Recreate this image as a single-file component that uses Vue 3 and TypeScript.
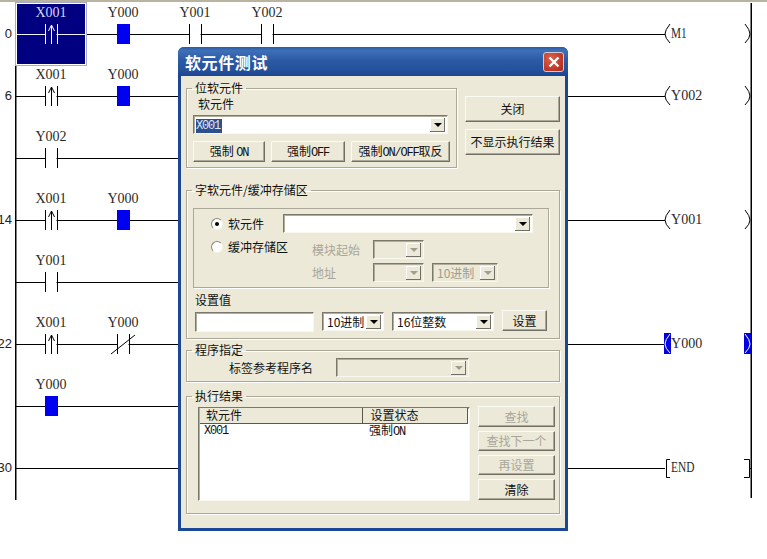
<script setup lang="ts">
interface Contact { x: number; label: string; kind: 'rise' | 'no' | 'nc' | 'block' }
interface Rung { y: number; num?: string; end: number; items: Contact[] }

const rungs: Rung[] = [
  { y: 34, num: '0', end: 665, items: [
    { x: 51, label: 'X001', kind: 'rise' }, { x: 123, label: 'Y000', kind: 'block' },
    { x: 195, label: 'Y001', kind: 'no' }, { x: 267, label: 'Y002', kind: 'no' } ] },
  { y: 96, num: '6', end: 665, items: [
    { x: 51, label: 'X001', kind: 'rise' }, { x: 123, label: 'Y000', kind: 'block' } ] },
  { y: 158, end: 300, items: [ { x: 51, label: 'Y002', kind: 'no' } ] },
  { y: 220, num: '14', end: 665, items: [
    { x: 51, label: 'X001', kind: 'rise' }, { x: 123, label: 'Y000', kind: 'block' } ] },
  { y: 282, end: 300, items: [ { x: 51, label: 'Y001', kind: 'no' } ] },
  { y: 344, num: '22', end: 665, items: [
    { x: 51, label: 'X001', kind: 'rise' }, { x: 123, label: 'Y000', kind: 'nc' } ] },
  { y: 406, end: 300, items: [ { x: 51, label: 'Y000', kind: 'block' } ] },
  { y: 468, num: '30', end: 665, items: [] },
]
const coils = [
  { y: 34, label: 'M1', active: false },
  { y: 96, label: 'Y002', active: false },
  { y: 220, label: 'Y001', active: false },
  { y: 344, label: 'Y000', active: true },
]
const isSel = (r: Rung, c: Contact): boolean => r.y === 34 && c.x === 51
</script>

<template>
  <div class="page">
    <svg class="ladder" width="767" height="559" viewBox="0 0 767 559">
      <rect x="0" y="0" width="767" height="2" fill="#b8b4a0" />
      <rect x="15" y="64" width="1.5" height="436" fill="#000" />
      <rect x="750.5" y="3" width="1.5" height="495" fill="#000" />

      <g v-for="r in rungs" :key="r.y">
        <text v-if="r.num" class="num" x="12" :y="r.y + 4">{{ r.num }}</text>
        <line x1="16" :x2="r.end" :y1="r.y + .5" :y2="r.y + .5" stroke="#000" stroke-width="1" />
      </g>

      <rect x="16.5" y="3.5" width="69" height="61" fill="#000080" stroke="#fff" stroke-width="1" />
      <rect x="15.5" y="2.5" width="71" height="63" fill="none" stroke="#a9a9c8" stroke-width="1" />
      <line x1="16" x2="86" y1="34.5" y2="34.5" stroke="#f0f0ff" stroke-width="1" />

      <g v-for="r in rungs" :key="'i' + r.y">
        <g v-for="c in r.items" :key="c.x">
          <g v-if="c.kind !== 'block'">
            <rect :x="c.x - 5.5" :y="r.y - 1" width="11" height="3" :fill="isSel(r, c) ? '#000080' : '#fff'" />
            <line :x1="c.x - 6 + .5" :x2="c.x - 6 + .5" :y1="r.y - 10" :y2="r.y + 10" :stroke="isSel(r, c) ? '#fff' : '#000'" />
            <line :x1="c.x + 6 + .5" :x2="c.x + 6 + .5" :y1="r.y - 10" :y2="r.y + 10" :stroke="isSel(r, c) ? '#fff' : '#000'" />
          </g>
          <g v-if="c.kind === 'rise'" :stroke="isSel(r, c) ? '#fff' : '#000'" fill="none">
            <path :d="`M${c.x + .5} ${r.y + 10}V${r.y - 9}M${c.x - 2.5} ${r.y - 3}L${c.x + .5} ${r.y - 9}L${c.x + 3.5} ${r.y - 3}`" />
          </g>
          <line v-if="c.kind === 'nc'" :x1="c.x - 12" :y1="r.y + 10" :x2="c.x + 12" :y2="r.y - 9" stroke="#000" />
          <rect v-if="c.kind === 'block'" :x="c.x - 6" :y="r.y - 10" width="13" height="20" fill="#0000f0" />
          <text
            class="dev"
            :class="{ onsel: isSel(r, c) }"
            :x="c.x"
            :y="r.y - 17"
            :textLength="c.label.length * 7.8"
            lengthAdjust="spacingAndGlyphs"
          >{{ c.label }}</text>
        </g>
      </g>

      <g v-for="c in coils" :key="c.y">
        <template v-if="c.active">
          <rect x="664" :y="c.y - 11" width="7" height="21" fill="#0000e0" />
          <rect x="744" :y="c.y - 11" width="7" height="21" fill="#0000e0" />
        </template>
        <path :d="`M670 ${c.y - 10}Q665 ${c.y - 4} 665 ${c.y}Q665 ${c.y + 4} 670 ${c.y + 9}`" fill="none" :stroke="c.active ? '#fff' : '#000'" />
        <path :d="`M745 ${c.y - 10}Q750 ${c.y - 4} 750 ${c.y}Q750 ${c.y + 4} 745 ${c.y + 9}`" fill="none" :stroke="c.active ? '#fff' : '#000'" />
        <text
          class="dev start"
          x="671"
          :y="c.y + 4"
          :textLength="c.label.length * 7.8"
          lengthAdjust="spacingAndGlyphs"
        >{{ c.label }}</text>
      </g>

      <path d="M670 459.5H666.5V477.5H670M744 459.5H749.5V477.5H744M749 468.5H751" fill="none" stroke="#000" />
      <text class="dev start" x="671" y="472" textLength="23.4" lengthAdjust="spacingAndGlyphs">END</text>
    </svg>

    <section class="dialog">
      <header class="titlebar">
        <span class="title">软元件测试</span>
        <button class="close" aria-label="关闭">
          <svg width="12" height="12" viewBox="0 0 12 12"><path d="M1.5 1.5L10.5 10.5M10.5 1.5L1.5 10.5" stroke="#fff" stroke-width="2.4" /></svg>
        </button>
      </header>

      <div class="client">
        <div class="top">
          <fieldset class="group bit">
            <legend>位软元件</legend>
            <div class="cap">软元件</div>
            <div class="combo bitcombo">
              <span class="val"><span class="sel mono">X001</span></span>
              <span class="arrow"><i></i></span>
            </div>
            <div class="forces">
              <button class="btn f1">强制 <span class="mono">ON</span></button>
              <button class="btn f2">强制<span class="mono">OFF</span></button>
              <button class="btn f3">强制<span class="mono">ON/OFF</span>取反</button>
            </div>
          </fieldset>
          <div class="side">
            <button class="btn big">关闭</button>
            <button class="btn big">不显示执行结果</button>
          </div>
        </div>

        <fieldset class="group word">
          <legend>字软元件/缓冲存储区</legend>
          <div class="inner">
            <div class="line one">
              <span class="radio on"></span><span class="rlabel">软元件</span>
              <div class="combo wide"><span class="val"></span><span class="arrow"><i></i></span></div>
            </div>
            <div class="buffer">
              <div class="bufleft"><span class="radio"></span><span class="rlabel">缓冲存储区</span></div>
              <div class="bufgrid">
                <span class="dim">模块起始</span>
                <div class="combo off small"><span class="val"></span><span class="arrow"><i></i></span></div>
                <span></span>
                <span class="dim">地址</span>
                <div class="combo off small"><span class="val"></span><span class="arrow"><i></i></span></div>
                <div class="combo off radix"><span class="val dimv">10进制</span><span class="arrow"><i></i></span></div>
              </div>
            </div>
          </div>
          <div class="setcap">设置值</div>
          <div class="setrow">
            <div class="field"></div>
            <div class="combo r10"><span class="val">10进制</span><span class="arrow"><i></i></span></div>
            <div class="combo r16"><span class="val">16位整数</span><span class="arrow"><i></i></span></div>
            <button class="btn setbtn">设置</button>
          </div>
        </fieldset>

        <fieldset class="group prog">
          <legend>程序指定</legend>
          <div class="progrow">
            <span class="proglabel">标签参考程序名</span>
            <div class="combo off progcombo"><span class="val"></span><span class="arrow"><i></i></span></div>
          </div>
        </fieldset>

        <fieldset class="group result">
          <legend>执行结果</legend>
          <div class="resrow">
            <div class="list">
              <div class="head"><span class="c1">软元件</span><span class="c2">设置状态</span></div>
              <div class="item"><span class="c1 mono">X001</span><span class="c2">强制<span class="mono">ON</span></span></div>
            </div>
            <div class="acts">
              <button class="btn act" disabled>查找</button>
              <button class="btn act" disabled>查找下一个</button>
              <button class="btn act" disabled>再设置</button>
              <button class="btn act">清除</button>
            </div>
          </div>
        </fieldset>
      </div>
    </section>
  </div>
</template>

<style>
html, body { margin: 0; background: #fff; }
</style>

<style scoped>
.page {
  position: relative;
  width: 767px;
  height: 559px;
  overflow: hidden;
  background: #fff;
  font-family: "Noto Sans CJK SC", "Liberation Sans", sans-serif;
  font-size: 12px;
  line-height: 14px;
  color: #111;
}
.ladder { display: block; }
.dev {
  font-family: "Liberation Serif", serif;
  font-size: 15px;
  text-anchor: middle;
  fill: #2a2a2a;
}
.dev.start { text-anchor: start; }
.dev.onsel { fill: #d8d8f0; }
.num {
  font-family: "Liberation Sans", sans-serif;
  font-size: 13px;
  text-anchor: end;
  fill: #222;
}
.mono { font-family: "Liberation Mono", monospace; font-size: 12px; letter-spacing: -1.2px; }

.dialog {
  position: absolute;
  left: 178px;
  top: 47px;
  width: 390px;
  height: 484px;
  box-sizing: border-box;
  background: #1c4796;
  border-radius: 6px 6px 0 0;
  display: flex;
  flex-direction: column;
  padding: 0 3px 3px;
}
.titlebar {
  height: 29px;
  margin: 0 -3px;
  padding: 0 4px 0 7px;
  display: flex;
  align-items: center;
  justify-content: space-between;
  border-radius: 6px 6px 0 0;
  background: linear-gradient(#2a5ba8 0%, #3e70b8 12%, #2c5aa4 45%, #24519c 80%, #1c4590 100%);
}
.title { color: #fff; font-size: 16px; font-weight: 700; letter-spacing: .6px; }
.close {
  width: 21px;
  height: 20px;
  padding: 0;
  display: flex;
  align-items: center;
  justify-content: center;
  box-sizing: border-box;
  border: 1px solid #d8c8d0;
  border-radius: 3px;
  background: radial-gradient(circle at 35% 30%, #d9654f, #c23b2a 60%, #a42a1c);
}
.client {
  flex: 1;
  background: #ece9d8;
  padding: 7px 5px 0;
  display: flex;
  flex-direction: column;
}
.top { display: flex; align-items: flex-start; }
.group {
  margin: 0;
  padding: 0;
  min-width: 0;
  box-sizing: border-box;
  border: 1px solid #aca899;
  box-shadow: 1px 1px 0 #fff, inset 1px 1px 0 #fff;
}
.group legend {
  margin-left: 5px;
  padding: 0 3px;
  font-size: 12px;
  line-height: 12px;
}
.bit { width: 272px; height: 86px; margin-top: -1px; }
.cap { padding: 3px 0 0 11px; line-height: 14px; }
.combo {
  display: flex;
  align-items: center;
  box-sizing: border-box;
  background: #fff;
  border: 1px solid;
  border-color: #7a7868 #f8f8f0 #f8f8f0 #7a7868;
  box-shadow: inset 1px 1px 0 #b0ad9c;
  padding: 2px;
}
.val { flex: 1; min-width: 0; white-space: nowrap; overflow: hidden; padding-left: 2px; line-height: 13px; }
.dimv { color: #a09e90; }
.arrow {
  width: 15px;
  height: 14px;
  flex: none;
  display: flex;
  align-items: center;
  justify-content: center;
  background: #ece9d8;
  box-shadow: inset -1px -1px 0 #716f64, inset 1px 1px 0 #fff;
}
.arrow i {
  width: 0; height: 0;
  border: 4px solid transparent;
  border-top: 4px solid #000;
  border-bottom: 0;
}
.off { background: #ece9d8; }
.off .arrow i { border-top-color: #a09e90; }
.bitcombo { width: 255px; height: 19px; margin: 4px 0 0 6px; }
.bitcombo .val { padding-left: 0; }
.sel { background: #2b4f8f; color: #dfe6f5; padding: 0 2px 0 0; }
.forces { display: flex; gap: 6px; margin: 7px 0 0 6px; }
.btn {
  box-sizing: border-box;
  padding: 0;
  font: inherit;
  color: #111;
  background: #ece9d8;
  border: 1px solid;
  border-color: #fbfbf5 #716f64 #716f64 #fbfbf5;
  box-shadow: inset -1px -1px 0 #aca899;
  display: inline-block;
  white-space: nowrap;
}
.btn:disabled { color: #a8a698; }
.f1 { width: 72px; height: 21px; }
.f2 { width: 74px; height: 21px; }
.f3 { width: 99px; height: 21px; }
.side { margin-left: 8px; display: flex; flex-direction: column; gap: 7px; padding-top: 13px; }
.big { width: 95px; height: 26px; }

.word { width: 374px; height: 155px; margin-top: 16px; }
.inner {
  width: 356px;
  height: 80px;
  box-sizing: border-box;
  margin: 12px 0 0 6px;
  border: 1px solid #aca899;
  box-shadow: 1px 1px 0 #fff;
  padding: 5px 0 0 17px;
}
.line { display: flex; align-items: center; }
.radio {
  width: 12px; height: 12px;
  flex: none;
  box-sizing: border-box;
  border-radius: 50%;
  background: #fff;
  border: 1px solid;
  border-color: #8a8878 #f4f4ea #f4f4ea #8a8878;
  position: relative;
}
.radio.on::after {
  content: "";
  position: absolute;
  left: 3px; top: 3px;
  width: 4px; height: 4px;
  border-radius: 50%;
  background: #000;
}
.rlabel { margin-left: 5px; }
.one .rlabel { width: 55px; }
.wide { width: 250px; height: 19px; }
.buffer { display: flex; margin-top: 7px; }
.bufleft { display: flex; align-items: center; width: 101px; height: 14px; }
.bufgrid {
  display: grid;
  grid-template-columns: 61px 51px 66px;
  grid-auto-rows: 19px;
  row-gap: 4px;
  align-items: center;
}
.dim { color: #a8a698; }
.small { width: 51px; height: 19px; }
.radix { width: 66px; height: 19px; margin-left: 8px; }
.setcap { margin: 5px 0 0 8px; line-height: 14px; }
.setrow { display: flex; align-items: flex-start; margin: 5px 0 0 8px; }
.field {
  width: 119px; height: 20px;
  box-sizing: border-box;
  background: #fff;
  border: 1px solid;
  border-color: #7a7868 #f8f8f0 #f8f8f0 #7a7868;
  box-shadow: inset 1px 1px 0 #b0ad9c;
}
.r10 { width: 62px; height: 19px; margin-left: 8px; }
.r16 { width: 102px; height: 19px; margin-left: 8px; }
.setbtn { width: 45px; height: 21px; margin-left: 8px; margin-top: -2px; }

.prog { width: 374px; height: 38px; margin-top: 5px; }
.progrow { display: flex; align-items: center; padding: 2px 0 0 42px; }
.proglabel { width: 107px; }
.progcombo { width: 133px; height: 19px; }

.result { width: 374px; height: 124px; margin-top: 8px; }
.resrow { display: flex; padding: 5px 0 0 11px; }
.list {
  width: 272px; height: 94px;
  box-sizing: border-box;
  background: #fff;
  border: 1px solid;
  border-color: #7a7868 #f8f8f0 #f8f8f0 #7a7868;
  box-shadow: inset 1px 1px 0 #b0ad9c;
  padding: 0 1px 0 1px;
}
.head { display: flex; height: 16px; background: #ece9d8; border-bottom: 1px solid #5a5848; box-sizing: border-box; }
.head .c1 { width: 164px; padding-left: 6px; box-sizing: border-box; border-right: 1px solid #5a5848; }
.head .c2 { width: 105px; padding-left: 7px; box-sizing: border-box; border-right: 1px solid #5a5848; }
.item { display: flex; height: 14px; align-items: center; }
.item .c1 { width: 169px; padding-left: 4px; box-sizing: border-box; }
.acts { margin: -1px 0 0 8px; display: flex; flex-direction: column; gap: 4px; }
.act { width: 77px; height: 21px; }
.act:nth-child(2), .act:nth-child(3) { height: 20px; }
</style>
